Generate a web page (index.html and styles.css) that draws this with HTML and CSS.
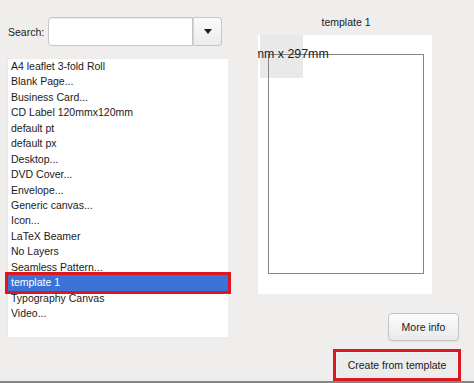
FILE: index.html
```html
<!DOCTYPE html>
<html lang="en">
<head>
    <meta charset="UTF-8">
    <meta name="viewport" content="width=device-width, initial-scale=1.0">
    <title>New from Template</title>
    <link rel="stylesheet" href="styles.css">
</head>
<body>
    <div class="dialog">
        <div class="left-pane">
            <div class="search-row">
                <label class="search-label" for="search">Search:</label>
                <input type="text" id="search" class="search-input">
                <button class="drop-btn"><span class="caret"></span></button>
            </div>
            <ul class="template-list">
                <li>A4 leaflet 3-fold Roll</li>
                <li>Blank Page...</li>
                <li>Business Card...</li>
                <li>CD Label 120mmx120mm</li>
                <li>default pt</li>
                <li>default px</li>
                <li>Desktop...</li>
                <li>DVD Cover...</li>
                <li>Envelope...</li>
                <li>Generic canvas...</li>
                <li>Icon...</li>
                <li>LaTeX Beamer</li>
                <li>No Layers</li>
                <li>Seamless Pattern...</li>
                <li class="selected">template 1</li>
                <li>Typography Canvas</li>
                <li>Video...</li>
            </ul>
        </div>

        <div class="right-pane">
            <div class="preview-wrap">
                <div class="preview-title">template 1</div>
                <div class="preview">
                    <div class="thumb-bg"></div>
                    <div class="page-rect"></div>
                    <div class="page-size">210mm x 297mm</div>
                </div>
            </div>
            <div class="actions">
                <button class="btn more-btn">More info</button>
                <button class="btn create-btn">Create from template</button>
            </div>
        </div>
    </div>
    <div class="bottom-edge"></div>
</body>
</html>
```

FILE: styles.css
```css
body {
    margin: 0;
    height: 383px;
    overflow: hidden;
    background-color: #efeeed;
    font-family: "Liberation Sans", Arial, sans-serif;
    font-size: 10.5px;
    color: #1a1a1a;
}

.dialog {
    display: flex;
    height: 364px;
    padding: 17px 0 0 8px;
}

.left-pane {
    width: 220px;
}

.search-row {
    display: flex;
    align-items: center;
    height: 29px;
}
.search-label {
    width: 40px;
}
.search-input {
    box-sizing: border-box;
    width: 145px;
    height: 29px;
    margin: 0;
    border: 1px solid #c6c6c6;
    border-radius: 4px 0 0 4px;
    box-shadow: inset 0 1px 1px rgba(0, 0, 0, 0.07);
    background-color: white;
}
.drop-btn {
    box-sizing: border-box;
    width: 29px;
    height: 29px;
    margin: 0;
    padding: 0;
    border: 1px solid #c6c6c6;
    border-left: 1px solid #d2d2d2;
    border-radius: 0 4px 4px 0;
    background: linear-gradient(#fbfbfb, #ebebeb);
    display: flex;
    align-items: center;
    justify-content: center;
}
.caret {
    width: 0;
    height: 0;
    border-left: 4px solid transparent;
    border-right: 4px solid transparent;
    border-top: 5px solid #1e1e1e;
}

.template-list {
    list-style: none;
    margin: 13px 0 0 0;
    padding: 0;
    height: 278px;
    background-color: white;
    box-shadow: -1px 0 2px rgba(0, 0, 0, 0.04);
}
.template-list li {
    height: 15.45px;
    line-height: 15.45px;
    padding-left: 3px;
    white-space: nowrap;
}
.template-list li:first-child {
    margin-top: 0.5px;
}
.template-list .selected {
    background-color: #3a72d8;
    color: white;
    outline: 3px solid #dc1720;
}

.right-pane {
    margin-left: 30px;
    width: 203px;
    display: flex;
    flex-direction: column;
}
.preview-wrap {
    width: 174px;
}
.preview-title {
    text-align: center;
    line-height: 12px;
    margin-top: -1px;
    padding-left: 2px;
}
.preview {
    position: relative;
    margin-top: 7px;
    height: 259px;
    background-color: white;
    overflow: hidden;
}
.thumb-bg {
    position: absolute;
    left: 2px;
    top: 0;
    width: 43px;
    height: 43px;
    background-color: #e9e9e9;
}
.page-rect {
    position: absolute;
    left: 10px;
    top: 19px;
    width: 154px;
    height: 218px;
    border: 1px solid #858585;
}
.page-size {
    position: absolute;
    left: -25px;
    top: 12px;
    line-height: 14px;
    font-size: 12.4px;
    color: #222;
    white-space: nowrap;
}

.actions {
    display: flex;
    flex-direction: column;
    align-items: flex-end;
    margin-top: 19px;
}
.btn {
    box-sizing: border-box;
    margin: 0;
    font-family: "Liberation Sans", Arial, sans-serif;
    font-size: 10.5px;
    color: #1a1a1a;
    border: 1px solid #c3c3c3;
    border-radius: 4px;
    background: linear-gradient(#fdfdfd, #e9e9e9);
    box-shadow: 0 1px 1px rgba(0, 0, 0, 0.06);
}
.more-btn {
    width: 71px;
    height: 28px;
    margin-right: 2px;
}
.create-btn {
    width: 122px;
    height: 26px;
    margin-top: 11px;
    margin-right: 3px;
    border-radius: 0;
    border-color: #f4f4f4;
    background: #ececec;
    outline: 3px solid #dc1720;
}

.bottom-edge {
    height: 2px;
    background-color: #858585;
}
```
